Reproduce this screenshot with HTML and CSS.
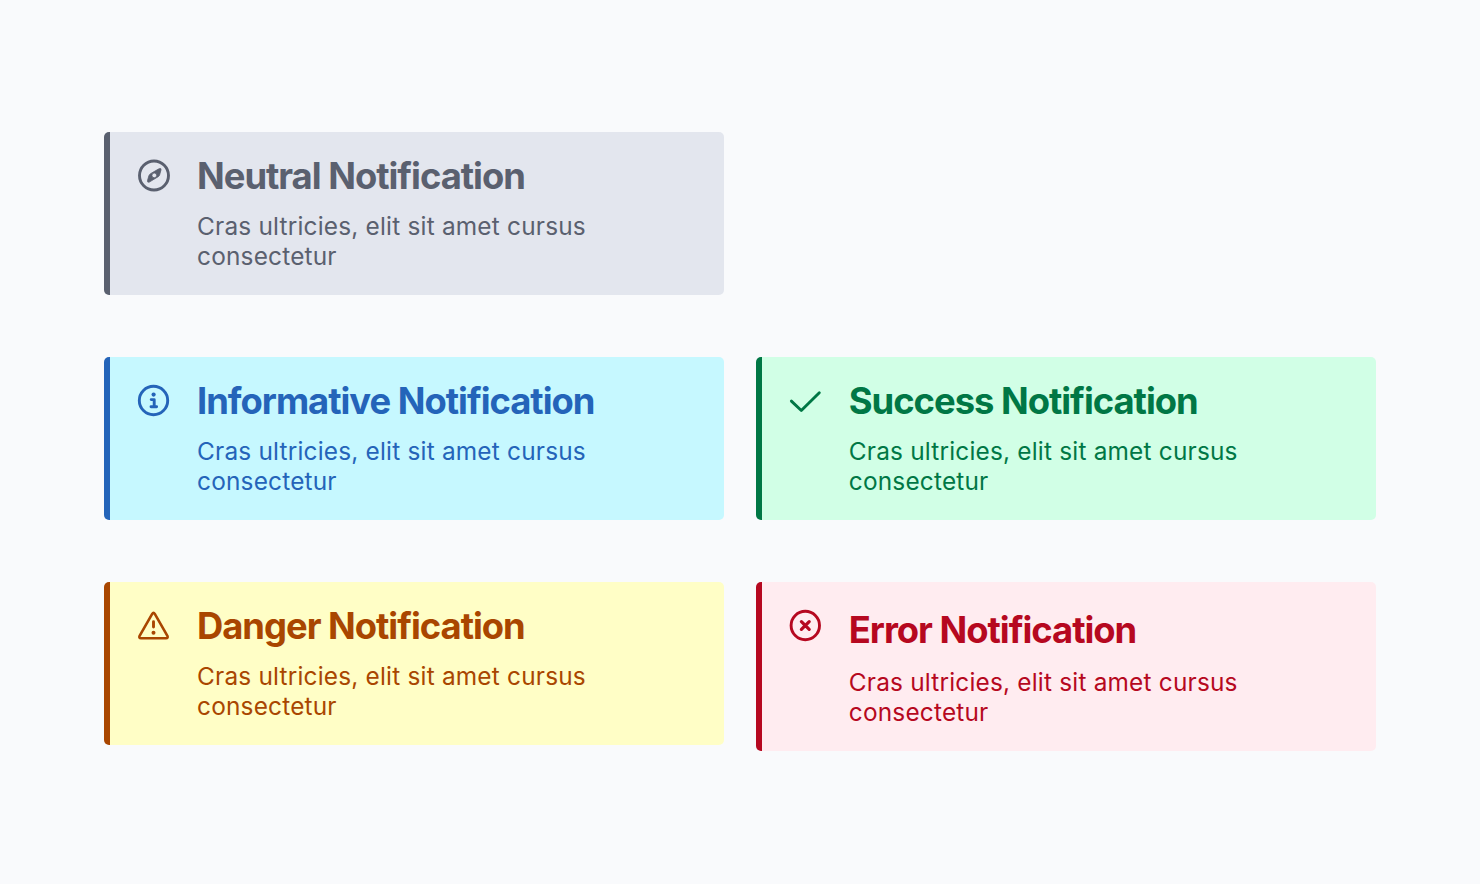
FILE: index.html
```html
<!DOCTYPE html>
<html lang="en">
<head>
<meta charset="utf-8">
<title>Notifications</title>
<link rel="stylesheet" href="styles.css">
</head>
<body>
<main class="board">
  <section class="note note--neutral">
    <svg class="note__icon" viewBox="0 0.5 34 34">
      <circle class="line" cx="17" cy="17" r="14.5"/>
      <path class="solid solid--edged" fill-rule="evenodd" d="M22.9 10Q24.4 9.8 24 11.4L22.6 16.4Q22.2 17.6 21.2 18.2L12.3 23.6Q10.2 24.3 10.5 22.1L11.8 17.5Q12.2 16 13.5 15.2L21.4 10.6ZM17.3 14.5A2.4 2.4 0 1 0 17.3 19.3A2.4 2.4 0 1 0 17.3 14.5Z"/>
    </svg>
    <div class="note__content">
      <h2 class="note__title">Neutral Notification</h2>
      <p class="note__text">Cras ultricies, elit sit amet cursus consectetur</p>
    </div>
  </section>
  <section class="note note--info">
    <svg class="note__icon" viewBox="0 0.5 34 34">
      <circle class="line" cx="16.5" cy="17" r="14.2"/>
      <circle class="solid" cx="16.6" cy="11.1" r="2.1"/>
      <path class="line" d="M14.2 16.1H17.2V23M14 23.3H19.6"/>
    </svg>
    <div class="note__content">
      <h2 class="note__title">Informative Notification</h2>
      <p class="note__text">Cras ultricies, elit sit amet cursus consectetur</p>
    </div>
  </section>
  <section class="note note--success">
    <svg class="note__icon" viewBox="0 0.5 34 34">
      <path class="line" d="M2.4 17.6L12.3 27L30.3 9.3"/>
    </svg>
    <div class="note__content">
      <h2 class="note__title">Success Notification</h2>
      <p class="note__text">Cras ultricies, elit sit amet cursus consectetur</p>
    </div>
  </section>
  <section class="note note--danger">
    <svg class="note__icon" viewBox="0 0.5 34 34">
      <path class="line line--slim" d="M15.2 5.4Q16.5 3.2 17.8 5.4L30.4 27.3Q31.4 29.7 29 29.7H4Q1.6 29.7 2.6 27.3Z"/>
      <path class="line" d="M16.5 13.1V18.6"/>
      <circle class="solid" cx="16.5" cy="24.2" r="2"/>
    </svg>
    <div class="note__content">
      <h2 class="note__title">Danger Notification</h2>
      <p class="note__text">Cras ultricies, elit sit amet cursus consectetur</p>
    </div>
  </section>
  <section class="note note--error">
    <svg class="note__icon" viewBox="0 0.5 34 34">
      <circle class="line" cx="16.3" cy="17" r="14.2"/>
      <path class="line line--bold" d="M12.4 13.1L20.2 20.9M20.2 13.1L12.4 20.9"/>
    </svg>
    <div class="note__content">
      <h2 class="note__title">Error Notification</h2>
      <p class="note__text">Cras ultricies, elit sit amet cursus consectetur</p>
    </div>
  </section>
</main>
</body>
</html>
```
FILE: styles.css
```css
* { box-sizing: border-box; }
body {
  margin: 0;
  min-height: 884px;
  background: #f9fafc;
  font-family: Inter, sans-serif;
}
.board {
  display: grid;
  grid-template-columns: 619.75px 619.75px;
  column-gap: 32px;
  row-gap: 62.25px;
  align-items: start;
  padding: 132px 104px 0;
}
.note {
  display: flex;
  align-items: flex-start;
  gap: 26px;
  height: 162.75px;
  padding: 26.75px 80px 0 33px;
  border-radius: 5px;
  color: var(--ink);
  background: linear-gradient(to right, var(--ink) 6.3px, var(--fill) 6.3px);
}
.note--neutral { --ink: #5a606f; --fill: #e3e6ee; grid-column: 1 / 3; width: 619.75px; }
.note--info { --ink: #2464b9; --fill: #c6f8ff; }
.note--success { --ink: #007745; --fill: #d1ffe6; }
.note--danger { --ink: #a94600; --fill: #fffec6; }
.note--error { --ink: #b60820; --fill: #ffecf0; height: 169px; }
.note__icon { flex: none; width: 34px; height: 34px; }
.line { fill: none; stroke: currentColor; stroke-width: 2.9; stroke-linecap: round; stroke-linejoin: round; }
.line--slim { stroke-width: 2.6; }
.line--bold { stroke-width: 3.2; }
.solid { fill: currentColor; }
.solid--edged { stroke: currentColor; stroke-width: 0.8; }
.note__content { width: 440px; }
.note__title {
  margin: 0;
  font-size: 36.4px;
  line-height: 35px;
  font-weight: 700;
  letter-spacing: -1.02px;
  white-space: nowrap;
}
.note__text {
  margin: 17px 0 0;
  font-size: 24.4px;
  line-height: 30px;
  letter-spacing: 0.2px;
}
.note--error .note__title { padding-top: 4px; }
.note--error .note__text { margin-top: 19px; }
```
